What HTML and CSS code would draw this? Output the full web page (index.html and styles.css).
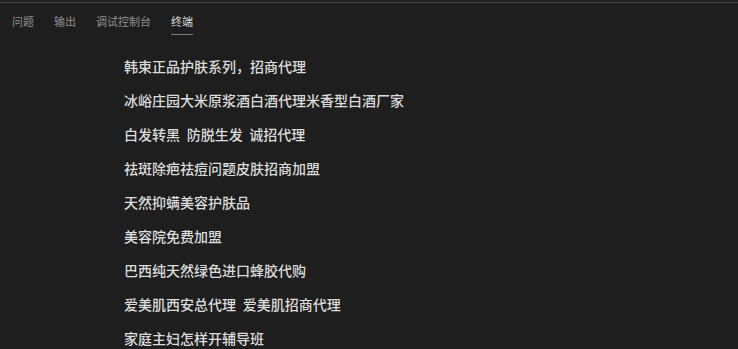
FILE: index.html
```html
<!DOCTYPE html>
<html lang="zh-CN">
<head>
<meta charset="utf-8">
<title>终端</title>
<link rel="stylesheet" href="styles.css">
</head>
<body>
<div class="panel">
  <div class="topline"></div>
  <div class="tabs">
    <span class="tab">问题</span>
    <span class="tab">输出</span>
    <span class="tab">调试控制台</span>
    <span class="tab active">终端</span>
  </div>
  <ul class="list">
    <li>韩束正品护肤系列，招商代理</li>
    <li>冰峪庄园大米原浆酒白酒代理米香型白酒厂家</li>
    <li>白发转黑 防脱生发 诚招代理</li>
    <li>祛斑除疤祛痘问题皮肤招商加盟</li>
    <li>天然抑螨美容护肤品</li>
    <li>美容院免费加盟</li>
    <li>巴西纯天然绿色进口蜂胶代购</li>
    <li>爱美肌西安总代理 爱美肌招商代理</li>
    <li>家庭主妇怎样开辅导班</li>
  </ul>
</div>
</body>
</html>
```
FILE: styles.css
```css
html, body {
  margin: 0;
  padding: 0;
  background: #1e1e1e;
  height: 100%;
  overflow: hidden;
}
.panel {
  font-family: "Noto Sans CJK SC", "Noto Sans", sans-serif;
}
.topline {
  height: 2px;
  background: #212121;
  border-bottom: 1px solid #474747;
}
.tabs {
  display: flex;
  gap: 20px;
  padding-left: 12px;
  padding-top: 6px;
  height: 29px;
}
.tab {
  font-size: 11px;
  line-height: 24px;
  height: 25px;
  color: #8f8f8f;
  box-sizing: border-box;
}
.tab.active {
  color: #d6d6d6;
  border-bottom: 1px solid #7c7c7c;
  height: 26px;
}
.list {
  list-style: none;
  margin: 0;
  padding: 11px 0 0 124px;
}
.list li {
  font-size: 14px;
  line-height: 34px;
  color: #dcdcdc;
  font-weight: 500;
  white-space: nowrap;
  word-spacing: 3.5px;
}
```
